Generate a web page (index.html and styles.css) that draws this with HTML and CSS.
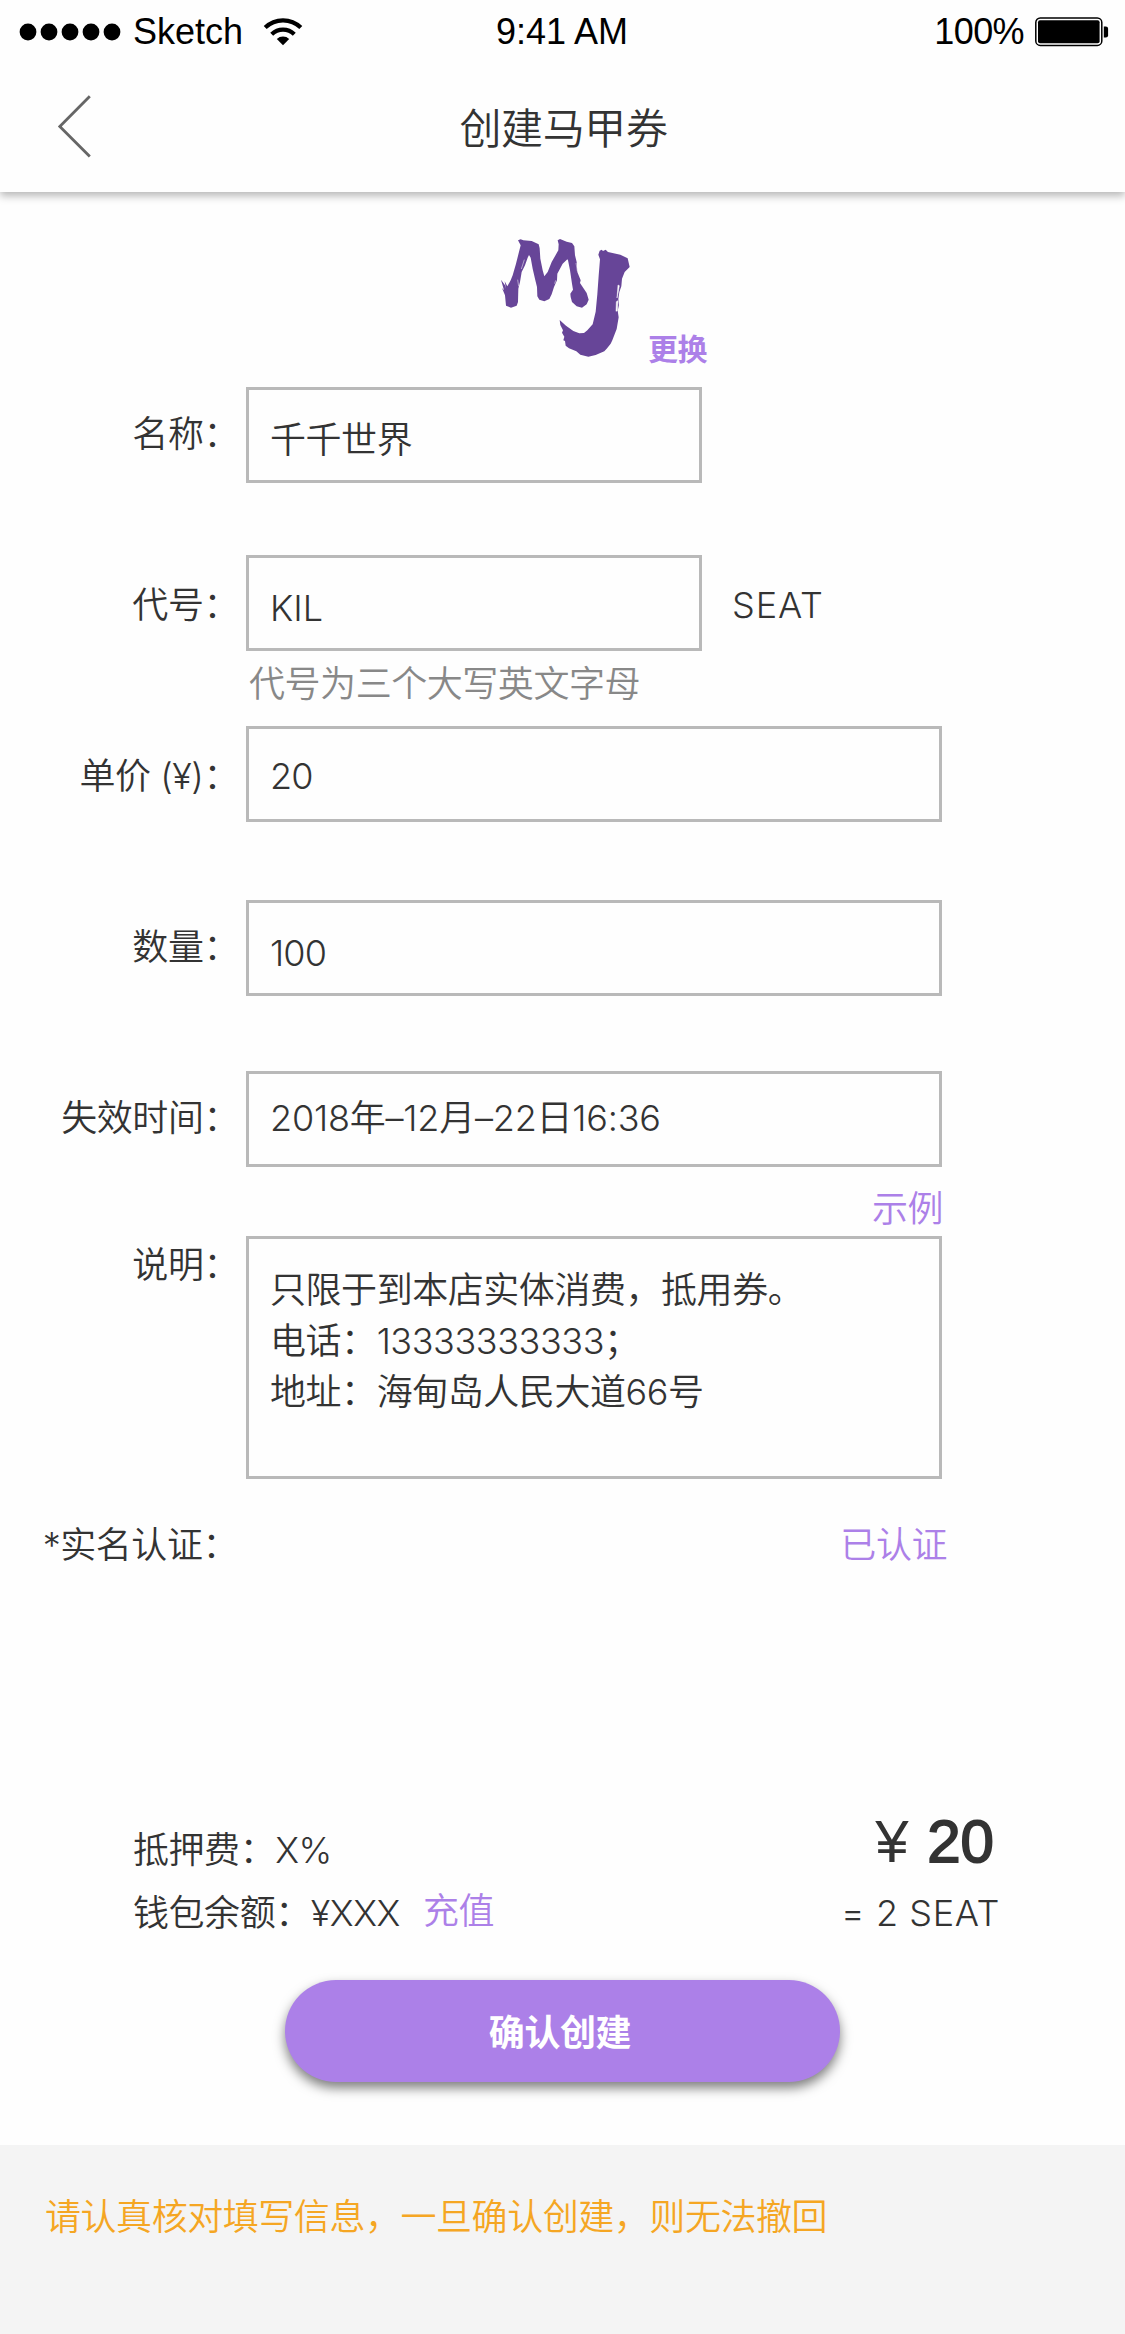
FILE: index.html
```html
<!DOCTYPE html>
<html lang="zh-CN">
<head>
<meta charset="utf-8">
<title>创建马甲券</title>
<link rel="stylesheet" href="styles.css">
</head>
<body>
<div class="screen">
  <header class="header">
    <div class="status">
      <div class="status-left">
        <svg class="signal" width="104" height="18" viewBox="0 0 104 18"><circle cx="9" cy="9" r="8.4"/><circle cx="30" cy="9" r="8.4"/><circle cx="51" cy="9" r="8.4"/><circle cx="72" cy="9" r="8.4"/><circle cx="93" cy="9" r="8.4"/></svg>
        <span class="carrier">Sketch</span>
        <svg class="wifi" width="40" height="30" viewBox="0 0 40 30">
          <path d="M2.2 10.6a25.5 25.5 0 0 1 35.6 0" fill="none" stroke="#000" stroke-width="4.2"/>
          <path d="M8.7 17.3a16.2 16.2 0 0 1 22.6 0" fill="none" stroke="#000" stroke-width="4.2"/>
          <path d="M13.8 22.1a9 9 0 0 1 12.4 0L20 28.2z"/>
        </svg>
      </div>
      <div class="time">9:41 AM</div>
      <div class="status-right">
        <span class="percent">100%</span>
        <svg class="battery" width="75" height="30" viewBox="0 0 75 30"><rect x="1.8" y="1" width="66" height="27.4" rx="4.5" fill="none" stroke="#000" stroke-width="1.5"/><rect x="4" y="3.2" width="61.6" height="23" rx="2"/><path d="M69.8 9.5h2q2.3 0 2.3 2.3v6.4q0 2.3-2.3 2.3h-2z"/></svg>
      </div>
    </div>
    <div class="nav">
      <svg class="back" width="36" height="64" viewBox="0 0 36 64"><path d="M32.8 1.2 2.8 31.4l30 30.2" fill="none" stroke="#666" stroke-width="2.8"/></svg>
      <h1 class="title">创建马甲券</h1>
    </div>
  </header>

  <section class="logo-row">
    <svg class="logo" width="130" height="120" viewBox="60 50 390 360">
      <path d="M114 60l8-3 8 3 25 2 21 10 3 12 2 31 7 35 5 18 10-13 12-30 20-35 1-18-3-12 7-4 20 8 16 4 7 10 2 27 5 20 2 30 10 25-2 8 8 12 12 18 6 20-6 14-14 10-16-4-14-13-4-15-1-10 8-12-3-18-6-40-6-30-2-3-14 13-16 30-1 20-9 20-7 22-7 14-15 7-15-5-6-10-1-28-5-20-8-35-6-33-5-8-4 8-8 23-10 20-5 30-5 20-1 40-4 11-17 6-15-6-3-31-9-22 6 7-9-32 12 17 3 10-4-22 8 15 10-18 6-15 10-35 14-55z"/>
      <path d="M359 91l6-3 4 4 8-4 7 7 37 8 22 11 6 26-15 15-8 20-2 23-6 17-3 21 2 18-4 17 3 20-6 35-13 34-5 10-12 15-7 8-26 11-22 5-24-6-12-10-22-9-10-8-2-14-5-2 3-11-7-12 3-7-8-16-2-15 19 17 22 16 18 7 14-1 10-8 16-18 9-38 5-52 4-56 4-49-5-14z"/>
      <path class="logo-nick" d="M414 194l4 2-3 18-4 19zM409 244l5-3-2 30-4 2zM133 118l-9 28M288 128l4 24M113 178l3 20M227 180l-3 10"/>
    </svg>
    <a class="change">更换</a>
  </section>

  <main class="form">
    <div class="row row-name">
      <label class="label">名称：</label>
      <div class="field short">千千世界</div>
    </div>
    <div class="row row-code">
      <label class="label">代号：</label>
      <div class="field short">KIL</div>
      <span class="suffix">SEAT</span>
    </div>
    <p class="hint">代号为三个大写英文字母</p>
    <div class="row row-price">
      <label class="label">单价 (¥)：</label>
      <div class="field">20</div>
    </div>
    <div class="row row-amount">
      <label class="label">数量：</label>
      <div class="field">100</div>
    </div>
    <div class="row row-expiry">
      <label class="label">失效时间：</label>
      <div class="field">2018年–12月–22日16:36</div>
    </div>
    <a class="example">示例</a>
    <div class="row row-desc">
      <label class="label">说明：</label>
      <div class="field area">只限于到本店实体消费，抵用券。<br>电话：13333333333；<br>地址：海甸岛人民大道66号</div>
    </div>
    <div class="row row-verify">
      <label class="label">*实名认证：</label>
      <span class="verified">已认证</span>
    </div>
  </main>

  <section class="summary">
    <div class="costs">
      <div class="deposit">抵押费：X%</div>
      <div class="wallet">钱包余额：¥XXX<a class="topup">充值</a></div>
    </div>
    <div class="totals">
      <div class="price"><span class="yen">¥</span> <span class="sum">20</span></div>
      <div class="seats">= 2 SEAT</div>
    </div>
  </section>

  <button class="submit">确认创建</button>

  <footer class="notice">请认真核对填写信息，一旦确认创建，则无法撤回</footer>
</div>
</body>
</html>
```

FILE: styles.css
```css
* { box-sizing: border-box; }

body { margin: 0; background: #fefefe; }

.screen {
  width: 1125px;
  height: 2334px;
  display: flex;
  flex-direction: column;
  overflow: hidden;
  color: #333;
  font: 350 36px/50px Inter, "Noto Sans CJK SC", sans-serif;
  letter-spacing: -0.45px;
}

.header {
  height: 192px;
  flex: none;
  background: #fefefe;
  box-shadow: 0 4px 8px rgba(0, 0, 0, 0.28);
}

.status {
  height: 62px;
  display: grid;
  grid-template-columns: 1fr auto 1fr;
  align-items: center;
  padding: 0 16px 0 19px;
  color: #000;
  font: 400 36px/64px "Liberation Sans", Arial, sans-serif;
  letter-spacing: 0;
}

.time { margin-right: 4px; }
.status-left, .status-right { display: flex; align-items: center; }
.status-right { justify-content: flex-end; gap: 10px; }
.percent { letter-spacing: -0.6px; }
.carrier { margin-left: 10px; }
.wifi { margin-left: 20px; }

.nav {
  height: 130px;
  display: grid;
  grid-template-columns: 1fr auto 1fr;
  align-items: center;
  padding: 0 57px;
}

.title {
  margin: 4px 0 0 2px;
  font-size: 42px;
  line-height: 60px;
  font-weight: 350;
  letter-spacing: -0.4px;
}

.logo-row {
  height: 195px;
  flex: none;
  display: flex;
  align-items: flex-start;
  padding: 45px 0 0 500px;
}

.logo { fill: #674598; }
.logo-nick { fill: #fefefe; stroke: #fefefe; stroke-width: 1.5; }

.change {
  margin: 87px 0 0 18px;
  color: #ac80e8;
  font-size: 30px;
  line-height: 50px;
  font-weight: 600;
}

.form { flex: none; }

.row { display: flex; height: 96px; }

.label {
  width: 239px;
  margin-right: 7px;
  line-height: 96px;
  text-align: right;
  white-space: nowrap;
}

.field {
  width: 696px;
  padding-left: 21px;
  border: 3px solid #b9b9b9;
  line-height: 90px;
  white-space: nowrap;
}

.short { width: 456px; }

.row-name .label { line-height: 95px; }
.row-name .field { line-height: 101px; }
.row-code { margin-top: 72px; }
.row-code .label { line-height: 101px; }
.suffix { margin-left: 30px; line-height: 100px; letter-spacing: 0.9px; }
.row-code .field { line-height: 100px; letter-spacing: 0; }

.hint {
  height: 75px;
  margin: 0;
  padding: 8px 0 0 249px;
  color: #888;
}

.row-price .label { line-height: 101px; }
.row-price .field { line-height: 94px; letter-spacing: -0.8px; }
.row-amount { margin-top: 78px; }
.row-amount .field { line-height: 100px; letter-spacing: -0.8px; }
.row-amount .label { line-height: 95px; }
.row-expiry { margin-top: 75px; }
.row-expiry .label { line-height: 95px; }
.row-expiry .field { line-height: 88px; letter-spacing: -0.2px; }

.example {
  display: block;
  width: 943px;
  height: 69px;
  padding-top: 17px;
  color: #ac80e8;
  text-align: right;
}

.row-desc { height: 243px; }
.row-desc .label { line-height: 59px; }
.area { padding-top: 26px; line-height: 51px; }

.row-verify { height: 50px; margin-top: 41px; }
.row-verify .label { width: 238px; margin-right: 8px; line-height: 50px; }
.verified { width: 701px; color: #ac80e8; text-align: right; }

.summary {
  flex: none;
  display: flex;
  justify-content: space-between;
  height: 200px;
  margin-top: 210px;
  padding: 0 127px 0 133px;
}

.costs { padding-top: 39px; line-height: 63px; }
.wallet { display: flex; }
.topup { margin: -2px 0 0 23px; color: #ac80e8; }

.totals { padding-top: 27px; text-align: right; }
.price {
  padding-right: 4px;
  font: 400 60px/70px "Liberation Sans", Arial, sans-serif;
  letter-spacing: 0;
}
.yen { margin-right: 2px; }
.sum { -webkit-text-stroke: 1.8px #333; }
.seats { padding-top: 11px; margin-right: -2px; letter-spacing: 0.6px; }

.submit {
  flex: none;
  width: 555px;
  height: 102px;
  margin: 0 0 0 285px;
  padding: 5px 5px 0 0;
  border: 0;
  border-radius: 51px;
  background: #ac80e8;
  box-shadow: 0 6px 12px rgba(0, 0, 0, 0.5);
  color: #fff;
  font: 600 36px/97px Inter, "Noto Sans CJK SC", sans-serif;
  letter-spacing: -0.4px;
}

.notice {
  height: 189px;
  flex: none;
  margin-top: 63px;
  padding: 47px 0 0 45px;
  background: #f4f4f4;
  color: #f5a623;
}
```
